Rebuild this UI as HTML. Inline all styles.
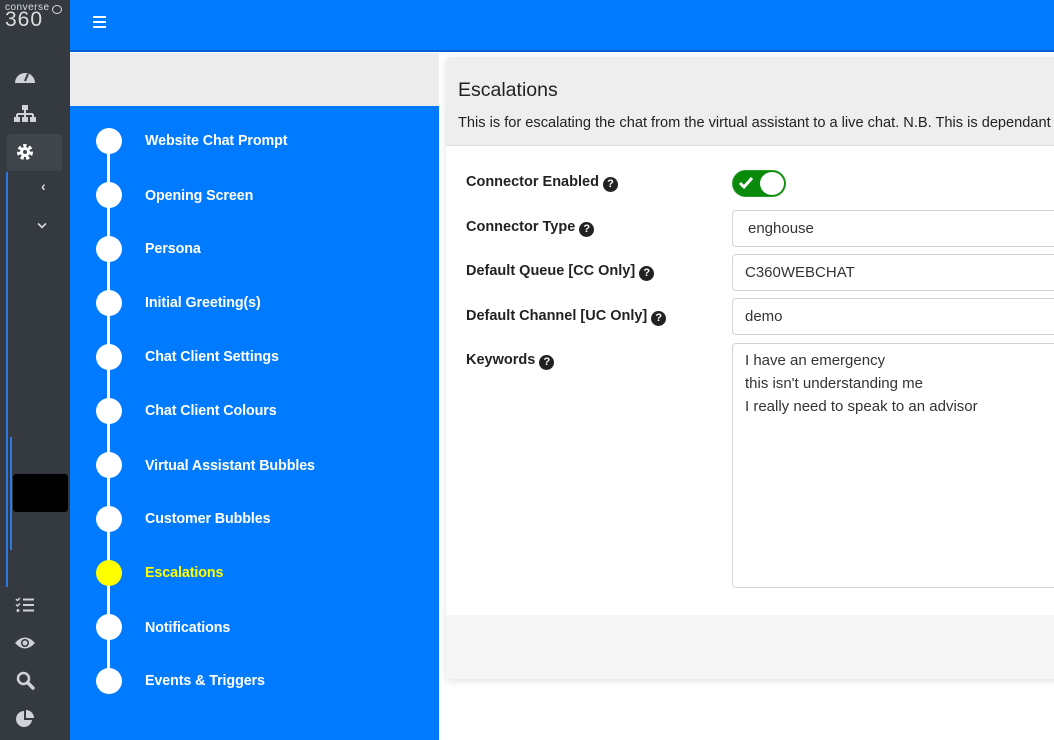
<!DOCTYPE html>
<html><head><meta charset="utf-8"><style>
*{box-sizing:border-box;margin:0;padding:0}
body{width:1054px;height:740px;overflow:hidden;background:#fff;font-family:"Liberation Sans",Arial,sans-serif;position:relative}
.side{position:absolute;left:0;top:0;width:70px;height:740px;background:#343a40}
.top{position:absolute;left:70px;top:0;width:984px;height:52px;background:#007bff;border-bottom:2px solid #0062cc}
.ham{position:absolute;left:93px;top:16px;width:13px}
.ham i{display:block;height:2px;background:#fff;margin-bottom:3px}
.strip{position:absolute;left:70px;top:53px;width:369px;height:53px;background:#ececec}
.blue{position:absolute;left:70px;top:106px;width:369px;height:634px;background:#007bff}
.vline{position:absolute;left:107px;top:141px;width:3px;height:540px;background:#fff}
.step{position:absolute;left:96px;width:26px;height:26px;border-radius:50%;background:#fff}
.lab{position:absolute;left:145px;color:#fff;font-size:14.3px;font-weight:bold;line-height:18px;letter-spacing:-0.1px}
.card{position:absolute;left:446px;top:57px;width:620px;height:622px;border-radius:5px;box-shadow:0 2px 8px rgba(0,0,0,.12);overflow:hidden;background:#fff}
.ch{height:89px;background:#eee;border-bottom:1px solid #ddd;padding:22px 12px}
.ch h2{font-weight:normal;font-size:19.5px;color:#222}
.ch p{font-size:14.6px;color:#222;margin-top:13px;white-space:nowrap}
.cf{position:absolute;left:0;top:558px;width:100%;height:64px;background:#f6f6f6}
.fl{position:absolute;left:466px;font-size:14.5px;font-weight:bold;color:#222}
.q{display:inline-block;width:15px;height:15px;border-radius:50%;background:#222;color:#fff;font-size:11px;text-align:center;line-height:15px;vertical-align:-1px;margin-left:4px}
.inp{position:absolute;left:732px;width:340px;border:1px solid #ced4da;border-radius:4px;font-size:15px;color:#333;padding:0 12px}
</style></head><body>
<div class="side">
 <div style="position:absolute;left:5px;top:3px;color:#ddd;font-size:10px;line-height:9px;letter-spacing:0.5px">converse</div>
 <div style="position:absolute;left:5px;top:10px;color:#ddd;font-size:21px;line-height:19px;letter-spacing:1px">360</div>
 <div style="position:absolute;left:52px;top:5px;width:10px;height:9px;border:1px solid #ddd;border-radius:50%"></div>
 <svg style="position:absolute;left:14px;top:67px" width="22" height="18" viewBox="0 0 22 18"><path d="M1 16A10 10 0 0 1 21 16Z" fill="#cfd2d6"/><path d="M11 14L14 7" stroke="#343a40" stroke-width="2"/></svg>
 <svg style="position:absolute;left:14px;top:104px" width="22" height="20" viewBox="0 0 22 20"><rect x="8" y="1" width="6" height="5" fill="#cfd2d6"/><path d="M11 6v4M3 10h16M3 10v3M11 10v3M19 10v3" stroke="#cfd2d6" stroke-width="2" fill="none"/><rect x="0" y="13" width="6" height="5" fill="#cfd2d6"/><rect x="8" y="13" width="6" height="5" fill="#cfd2d6"/><rect x="16" y="13" width="6" height="5" fill="#cfd2d6"/></svg>
 <div style="position:absolute;left:7px;top:134px;width:55px;height:37px;background:#40454b;border-radius:3px"></div>
 <svg style="position:absolute;left:16px;top:143px" width="18" height="18" viewBox="0 0 18 18"><circle cx="9" cy="9" r="6" fill="none" stroke="#fff" stroke-width="4" stroke-dasharray="3 2.3"/><circle cx="9" cy="9" r="5" fill="#fff"/><circle cx="9" cy="9" r="2" fill="#40454b"/></svg>
 <div style="position:absolute;left:6px;top:172px;width:2px;height:415px;background:#2a7ae2"></div>
 <div style="position:absolute;left:10px;top:437px;width:2px;height:113px;background:#2a7ae2"></div>
 <div style="position:absolute;left:41px;top:178px;color:#ddd;font-size:14px;font-weight:bold">&lsaquo;</div>
 <div style="position:absolute;left:38px;top:220px;width:8px;height:8px;border-right:2px solid #ddd;border-bottom:2px solid #ddd;transform:rotate(45deg) scale(.8)"></div>
 <div style="position:absolute;left:13px;top:474px;width:55px;height:38px;background:#000;border-radius:3px"></div>
 <svg style="position:absolute;left:15px;top:597px" width="20" height="16" viewBox="0 0 20 16"><path d="M1 2l1.5 1.5L5 1M1 7.5l1.5 1.5L5 6.5" stroke="#cfd2d6" stroke-width="1.5" fill="none"/><circle cx="3" cy="13.5" r="1.5" fill="#cfd2d6"/><path d="M8 2.5h11M8 8h11M8 13.5h11" stroke="#cfd2d6" stroke-width="2"/></svg>
 <svg style="position:absolute;left:14px;top:636px" width="22" height="14" viewBox="0 0 22 14"><path d="M1 7Q11 -4 21 7Q11 18 1 7Z" fill="#cfd2d6"/><circle cx="11" cy="7" r="4" fill="#343a40"/><circle cx="11" cy="7" r="2.5" fill="#cfd2d6"/></svg>
 <svg style="position:absolute;left:16px;top:671px" width="19" height="19" viewBox="0 0 19 19"><circle cx="7.5" cy="7.5" r="5.5" fill="none" stroke="#cfd2d6" stroke-width="2.5"/><path d="M11.5 11.5L17 17" stroke="#cfd2d6" stroke-width="3.5" stroke-linecap="round"/></svg>
 <svg style="position:absolute;left:15px;top:709px" width="20" height="20" viewBox="0 0 20 20"><path d="M9 2A8 8 0 1 0 17 11H9Z" fill="#cfd2d6"/><path d="M11 1A8 8 0 0 1 19 9H11Z" fill="#cfd2d6"/></svg>
</div>
<div class="top"></div>
<div class="ham"><i></i><i></i><i></i></div>
<div class="strip"></div>
<div class="blue"></div>
<div class="vline"></div>
<div class="step" style="top:128px"></div><div class="lab" style="top:132px">Website Chat Prompt</div>
<div class="step" style="top:182px"></div><div class="lab" style="top:187px">Opening Screen</div>
<div class="step" style="top:236px"></div><div class="lab" style="top:240px">Persona</div>
<div class="step" style="top:290px"></div><div class="lab" style="top:294px">Initial Greeting(s)</div>
<div class="step" style="top:344px"></div><div class="lab" style="top:348px">Chat Client Settings</div>
<div class="step" style="top:398px"></div><div class="lab" style="top:402px">Chat Client Colours</div>
<div class="step" style="top:452px"></div><div class="lab" style="top:457px">Virtual Assistant Bubbles</div>
<div class="step" style="top:506px"></div><div class="lab" style="top:510px">Customer Bubbles</div>
<div class="step" style="top:560px;background:#ff0"></div><div class="lab" style="top:564px;color:#ff0">Escalations</div>
<div class="step" style="top:614px"></div><div class="lab" style="top:619px">Notifications</div>
<div class="step" style="top:668px"></div><div class="lab" style="top:672px">Events &amp; Triggers</div>
<div class="card">
 <div class="ch"><h2>Escalations</h2><p>This is for escalating the chat from the virtual assistant to a live chat. N.B. This is dependant on</p></div>
 <div class="cf"></div>
</div>
<div class="fl" style="top:174px">Connector Enabled<span class="q">?</span></div>
<div class="fl" style="top:219px">Connector Type<span class="q">?</span></div>
<div class="fl" style="top:263px">Default Queue [CC Only]<span class="q">?</span></div>
<div class="fl" style="top:308px">Default Channel [UC Only]<span class="q">?</span></div>
<div class="fl" style="top:352px">Keywords<span class="q">?</span></div>
<div style="position:absolute;left:732px;top:170px;width:54px;height:27px;border-radius:14px;background:#0a8a0a;border:1px solid #2a9a2a"></div>
<div style="position:absolute;left:760px;top:172px;width:24px;height:23px;border-radius:50%;background:#fff"></div>
<svg style="position:absolute;left:738px;top:176px" width="16" height="14" viewBox="0 0 16 14"><path d="M2 7l4 4 8-9" stroke="#fff" stroke-width="3" fill="none"/></svg>
<div class="inp" style="top:210px;height:37px;line-height:35px;padding-left:15px">enghouse</div>
<div class="inp" style="top:254px;height:37px;line-height:35px">C360WEBCHAT</div>
<div class="inp" style="top:298px;height:37px;line-height:35px">demo</div>
<div class="inp" style="top:343px;height:245px;line-height:23px;padding-top:5px">I have an emergency<br>this isn't understanding me<br>I really need to speak to an advisor</div>
</body></html>
